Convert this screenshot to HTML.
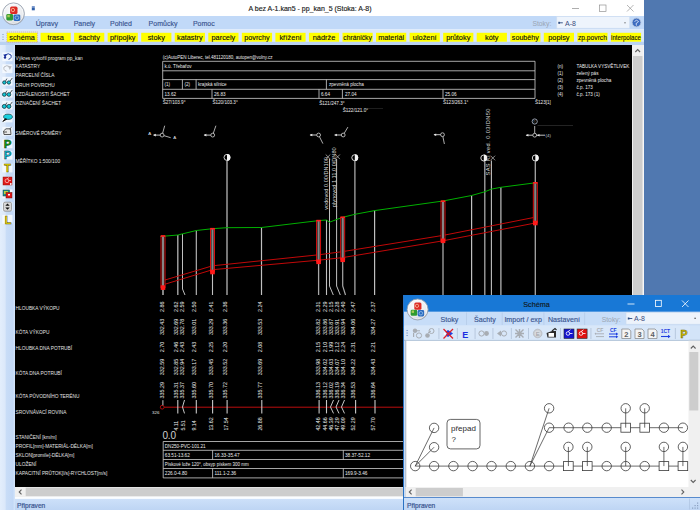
<!DOCTYPE html><html><head><meta charset="utf-8"><style>html,body{margin:0;padding:0;width:700px;height:510px;overflow:hidden;background:#5078b0;}svg{display:block;font-family:"Liberation Sans",sans-serif;}</style></head><body>
<svg width="700" height="510" viewBox="0 0 700 510">
<defs>
<linearGradient id="lefttb" x1="0" x2="1" y1="0" y2="0"><stop offset="0" stop-color="#e3eefc"/><stop offset="0.35" stop-color="#dbe8fa"/><stop offset="0.4" stop-color="#c9ddf7"/><stop offset="0.85" stop-color="#c2d8f6"/><stop offset="1" stop-color="#d6e6fa"/></linearGradient>
<linearGradient id="status" x1="0" x2="0" y1="0" y2="1"><stop offset="0" stop-color="#cfe2fa"/><stop offset="1" stop-color="#bed5f4"/></linearGradient>
<radialGradient id="orb" cx="0.45" cy="0.35" r="0.7"><stop offset="0" stop-color="#ffffff"/><stop offset="0.7" stop-color="#e8eaee"/><stop offset="1" stop-color="#a9b0bb"/></radialGradient>
</defs>
<rect x="0" y="0" width="644" height="510" fill="#ffffff"/>
<rect x="0" y="16" width="644" height="13.4" fill="#c1d9f8"/>
<rect x="0" y="29.5" width="644" height="15.5" fill="#dae8f9"/>
<rect x="0" y="41.8" width="644" height="3.2" fill="#bad2f2"/>
<text x="310" y="11" font-size="7" fill="#1a1a1a" text-anchor="middle" stroke="#1a1a1a" stroke-width="0.15">A bez A-1.kan5 - pp_kan_5 (Stoka: A-8)</text>
<rect x="572" y="8" width="7" height="0.7" fill="#8c8c8c"/>
<rect x="599.5" y="5" width="6.5" height="6.5" fill="none" stroke="#8c8c8c" stroke-width="0.65"/>
<path d="M627 5 L633.5 11.5 M633.5 5 L627 11.5" stroke="#8c8c8c" stroke-width="0.65"/>
<rect x="31.8" y="7.3" width="3" height="3" fill="#2f5fa8"/><rect x="31.8" y="6" width="3" height="1.2" fill="#7c9ad0"/>
<text x="35.8" y="26.3" font-size="7" fill="#3a5590" text-anchor="start" stroke="#3a5590" stroke-width="0.15">Úpravy</text>
<text x="73.7" y="26.3" font-size="7" fill="#3a5590" text-anchor="start" stroke="#3a5590" stroke-width="0.15">Panely</text>
<text x="110" y="26.3" font-size="7" fill="#3a5590" text-anchor="start" stroke="#3a5590" stroke-width="0.15">Pohled</text>
<text x="148.6" y="26.3" font-size="7" fill="#3a5590" text-anchor="start" stroke="#3a5590" stroke-width="0.15">Pomůcky</text>
<text x="192.9" y="26.3" font-size="7" fill="#3a5590" text-anchor="start" stroke="#3a5590" stroke-width="0.15">Pomoc</text>
<text x="532.4" y="26" font-size="6.8" fill="#9aa5b3" text-anchor="start" >Stoky:</text>
<rect x="556.8" y="16.6" width="72.8" height="11.6" fill="#eef4fc" stroke="#d0def0" stroke-width="0.6"/>
<path d="M559 22.8 h3.8" stroke="#2a4a80" stroke-width="0.9"/><rect x="558.3" y="21.8" width="1.6" height="2" fill="#2a4a80"/>
<text x="565" y="25.6" font-size="7" fill="#3a4c80" text-anchor="start" >A-8</text>
<rect x="624.5" y="22.3" width="1" height="1" fill="#333"/>
<circle cx="636.5" cy="22.5" r="4.4" fill="#3c6cc0" stroke="#b8c6dc" stroke-width="0.9"/><path d="M634.5 21.5 Q636.5 19 638.5 21.5 Q637.5 23 636 23.5 L636.5 25.5" fill="none" stroke="#e8f0ff" stroke-width="0.8"/>
<circle cx="13.5" cy="13.8" r="10.9" fill="url(#orb)" stroke="#9aa3b0" stroke-width="0.90"/><circle cx="13.5" cy="13.8" r="9.60" fill="none" stroke="#ffffff" stroke-width="0.80" opacity="0.8"/><rect x="6.30" y="14.00" width="6.80" height="6.40" rx="1.40" fill="#2f9a30"/><rect x="7.30" y="14.80" width="2.50" height="2.50" fill="#c8d860" opacity="0.8"/><rect x="13.50" y="14.40" width="6.80" height="6.60" rx="1.40" fill="#2c6cc0"/><circle cx="16.90" cy="17.70" r="1.80" fill="none" stroke="#a8d0f0" stroke-width="0.70"/><rect x="10.10" y="6.60" width="7.40" height="7.40" rx="1.60" fill="#dc2a24"/><circle cx="12.90" cy="10.00" r="1.70" fill="none" stroke="#ffd8b0" stroke-width="0.70"/>
<rect x="7.00" y="32.8" width="30.2" height="8.9" fill="#ffff00"/>
<text x="22.10" y="39.6" font-size="7.4" fill="#0a0a0a" text-anchor="middle" stroke="#111" stroke-width="0.12" textLength="25.5" lengthAdjust="spacingAndGlyphs">schéma</text>
<rect x="40.55" y="32.8" width="30.2" height="8.9" fill="#ffff00"/>
<text x="55.65" y="39.6" font-size="7.4" fill="#0a0a0a" text-anchor="middle" stroke="#111" stroke-width="0.12">trasa</text>
<rect x="74.10" y="32.8" width="30.2" height="8.9" fill="#ffff00"/>
<text x="89.20" y="39.6" font-size="7.4" fill="#0a0a0a" text-anchor="middle" stroke="#111" stroke-width="0.12">šachty</text>
<rect x="107.65" y="32.8" width="30.2" height="8.9" fill="#ffff00"/>
<text x="122.75" y="39.6" font-size="7.4" fill="#0a0a0a" text-anchor="middle" stroke="#111" stroke-width="0.12" textLength="25.5" lengthAdjust="spacingAndGlyphs">přípojky</text>
<rect x="141.20" y="32.8" width="30.2" height="8.9" fill="#ffff00"/>
<text x="156.30" y="39.6" font-size="7.4" fill="#0a0a0a" text-anchor="middle" stroke="#111" stroke-width="0.12">stoky</text>
<rect x="174.75" y="32.8" width="30.2" height="8.9" fill="#ffff00"/>
<text x="189.85" y="39.6" font-size="7.4" fill="#0a0a0a" text-anchor="middle" stroke="#111" stroke-width="0.12" textLength="25.5" lengthAdjust="spacingAndGlyphs">katastry</text>
<rect x="208.30" y="32.8" width="30.2" height="8.9" fill="#ffff00"/>
<text x="223.40" y="39.6" font-size="7.4" fill="#0a0a0a" text-anchor="middle" stroke="#111" stroke-width="0.12">parcely</text>
<rect x="241.85" y="32.8" width="30.2" height="8.9" fill="#ffff00"/>
<text x="256.95" y="39.6" font-size="7.4" fill="#0a0a0a" text-anchor="middle" stroke="#111" stroke-width="0.12" textLength="25.5" lengthAdjust="spacingAndGlyphs">povrchy</text>
<rect x="275.40" y="32.8" width="30.2" height="8.9" fill="#ffff00"/>
<text x="290.50" y="39.6" font-size="7.4" fill="#0a0a0a" text-anchor="middle" stroke="#111" stroke-width="0.12">křížení</text>
<rect x="308.95" y="32.8" width="30.2" height="8.9" fill="#ffff00"/>
<text x="324.05" y="39.6" font-size="7.4" fill="#0a0a0a" text-anchor="middle" stroke="#111" stroke-width="0.12">nádrže</text>
<rect x="342.50" y="32.8" width="30.2" height="8.9" fill="#ffff00"/>
<text x="357.60" y="39.6" font-size="7.4" fill="#0a0a0a" text-anchor="middle" stroke="#111" stroke-width="0.12" textLength="28.5" lengthAdjust="spacingAndGlyphs">chráničky</text>
<rect x="376.05" y="32.8" width="30.2" height="8.9" fill="#ffff00"/>
<text x="391.15" y="39.6" font-size="7.4" fill="#0a0a0a" text-anchor="middle" stroke="#111" stroke-width="0.12" textLength="26" lengthAdjust="spacingAndGlyphs">materiál</text>
<rect x="409.60" y="32.8" width="30.2" height="8.9" fill="#ffff00"/>
<text x="424.70" y="39.6" font-size="7.4" fill="#0a0a0a" text-anchor="middle" stroke="#111" stroke-width="0.12">uložení</text>
<rect x="443.15" y="32.8" width="30.2" height="8.9" fill="#ffff00"/>
<text x="458.25" y="39.6" font-size="7.4" fill="#0a0a0a" text-anchor="middle" stroke="#111" stroke-width="0.12">průtoky</text>
<rect x="476.70" y="32.8" width="30.2" height="8.9" fill="#ffff00"/>
<text x="491.80" y="39.6" font-size="7.4" fill="#0a0a0a" text-anchor="middle" stroke="#111" stroke-width="0.12">kóty</text>
<rect x="510.25" y="32.8" width="30.2" height="8.9" fill="#ffff00"/>
<text x="525.35" y="39.6" font-size="7.4" fill="#0a0a0a" text-anchor="middle" stroke="#111" stroke-width="0.12" textLength="27" lengthAdjust="spacingAndGlyphs">souběhy</text>
<rect x="543.80" y="32.8" width="30.2" height="8.9" fill="#ffff00"/>
<text x="558.90" y="39.6" font-size="7.4" fill="#0a0a0a" text-anchor="middle" stroke="#111" stroke-width="0.12">popisy</text>
<rect x="577.35" y="32.8" width="30.2" height="8.9" fill="#ffff00"/>
<text x="592.45" y="39.6" font-size="7.4" fill="#0a0a0a" text-anchor="middle" stroke="#111" stroke-width="0.12" textLength="29" lengthAdjust="spacingAndGlyphs">zp.povrch</text>
<rect x="610.90" y="32.8" width="30.2" height="8.9" fill="#ffff00"/>
<text x="626.00" y="39.6" font-size="7.4" fill="#0a0a0a" text-anchor="middle" stroke="#111" stroke-width="0.12" textLength="29.8" lengthAdjust="spacingAndGlyphs">interpolace</text>
<rect x="6.8" y="32" width="30.8" height="10.3" fill="none" stroke="#d68a5a" stroke-width="0.6" stroke-dasharray="1 1"/>
<rect x="2.5" y="34" width="1" height="1" fill="#7d96bd"/>
<rect x="2.5" y="36.5" width="1" height="1" fill="#7d96bd"/>
<rect x="2.5" y="39" width="1" height="1" fill="#7d96bd"/>
<rect x="0" y="45" width="15" height="465" fill="url(#lefttb)"/>
<rect x="15" y="497" width="629" height="13" fill="url(#status)"/>
<rect x="15" y="496.3" width="629" height="2.6" fill="#fbfdff"/>
<text x="17" y="507.5" font-size="6.6" fill="#3a5590" text-anchor="start" stroke="#3a5590" stroke-width="0.2">Připraven</text>
<rect x="15" y="45" width="617" height="442" fill="#000"/>
<rect x="632" y="45" width="11.5" height="442" fill="#f0f0f0"/>
<rect x="633" y="56" width="9.5" height="431" fill="#cdcdcd"/>
<path d="M635.3 52 L637.7 49.6 L640.1 52" fill="none" stroke="#606060" stroke-width="1.1"/>
<rect x="15" y="487" width="617" height="10" fill="#f0f0f0"/>
<rect x="25.7" y="487.6" width="606" height="8.5" fill="#cdcdcd"/>
<path d="M21.5 489.6 L19.2 492 L21.5 494.4" fill="none" stroke="#606060" stroke-width="1.1"/>
<g>
<clipPath id="dclip"><rect x="15" y="45" width="617" height="442"/></clipPath><g clip-path="url(#dclip)">
<text x="15.6" y="59.6" font-size="4.8" fill="#e4e4e4" text-anchor="start" >Výkres vytvořil program pp_kan</text>
<text x="15.6" y="68.2" font-size="4.8" fill="#e4e4e4" text-anchor="start" >KATASTRY</text>
<text x="15.6" y="77" font-size="4.8" fill="#e4e4e4" text-anchor="start" >PARCELNÍ ČÍSLA</text>
<text x="15.6" y="86.7" font-size="4.8" fill="#e4e4e4" text-anchor="start" >DRUH POVRCHU</text>
<text x="15.6" y="95.5" font-size="4.8" fill="#e4e4e4" text-anchor="start" >VZDÁLENOSTI ŠACHET</text>
<text x="15.6" y="104.7" font-size="4.8" fill="#e4e4e4" text-anchor="start" >OZNAČENÍ ŠACHET</text>
<text x="15.6" y="134.8" font-size="4.8" fill="#e4e4e4" text-anchor="start" >SMĚROVÉ POMĚRY</text>
<text x="15.6" y="162.6" font-size="4.8" fill="#e4e4e4" text-anchor="start" >MĚŘÍTKO 1:500/100</text>
<text x="15.6" y="310" font-size="4.8" fill="#e4e4e4" text-anchor="start" >HLOUBKA VÝKOPU</text>
<text x="15.6" y="333.7" font-size="4.8" fill="#e4e4e4" text-anchor="start" >KÓTA VÝKOPU</text>
<text x="15.6" y="350.3" font-size="4.8" fill="#e4e4e4" text-anchor="start" >HLOUBKA DNA POTRUBÍ</text>
<text x="15.6" y="374.5" font-size="4.8" fill="#e4e4e4" text-anchor="start" >KÓTA DNA POTRUBÍ</text>
<text x="15.6" y="398.2" font-size="4.8" fill="#e4e4e4" text-anchor="start" >KÓTA PŮVODNÍHO TERÉNU</text>
<text x="15.6" y="413.5" font-size="4.8" fill="#e4e4e4" text-anchor="start" >SROVNÁVACÍ ROVINA</text>
<text x="15.6" y="439.4" font-size="4.8" fill="#e4e4e4" text-anchor="start" >STANIČENÍ [km/m]</text>
<text x="15.6" y="447.7" font-size="4.8" fill="#e4e4e4" text-anchor="start" >PROFIL[mm]-MATERIÁL-DÉLKA[m]</text>
<text x="15.6" y="457.3" font-size="4.8" fill="#e4e4e4" text-anchor="start" >SKLON[promile]-DÉLKA[m]</text>
<text x="15.6" y="466" font-size="4.8" fill="#e4e4e4" text-anchor="start" >ULOŽENÍ</text>
<text x="15.6" y="475" font-size="4.8" fill="#e4e4e4" text-anchor="start" >KAPACITNÍ PRŮTOK[l/s]-RYCHLOST[m/s]</text>
<line x1="162.7" y1="61.3" x2="535" y2="61.3" stroke="#d0d0d0" stroke-width="0.8"/>
<line x1="162.7" y1="70.8" x2="535" y2="70.8" stroke="#d0d0d0" stroke-width="0.8"/>
<line x1="162.7" y1="79.6" x2="535" y2="79.6" stroke="#d0d0d0" stroke-width="0.8"/>
<line x1="162.7" y1="89.3" x2="535" y2="89.3" stroke="#d0d0d0" stroke-width="0.8"/>
<line x1="162.7" y1="98.4" x2="535" y2="98.4" stroke="#d0d0d0" stroke-width="0.8"/>
<line x1="162.7" y1="61.3" x2="162.7" y2="98.4" stroke="#d0d0d0" stroke-width="0.8"/>
<line x1="535" y1="61.3" x2="535" y2="98.4" stroke="#d0d0d0" stroke-width="0.8"/>
<line x1="182.4" y1="79.6" x2="182.4" y2="89.3" stroke="#d0d0d0" stroke-width="0.8"/>
<line x1="196.1" y1="79.6" x2="196.1" y2="89.3" stroke="#d0d0d0" stroke-width="0.8"/>
<line x1="326.4" y1="79.6" x2="326.4" y2="89.3" stroke="#d0d0d0" stroke-width="0.8"/>
<line x1="212" y1="89.3" x2="212" y2="98.4" stroke="#d0d0d0" stroke-width="0.8"/>
<line x1="319" y1="89.3" x2="319" y2="98.4" stroke="#d0d0d0" stroke-width="0.8"/>
<line x1="342.4" y1="89.3" x2="342.4" y2="98.4" stroke="#d0d0d0" stroke-width="0.8"/>
<line x1="443" y1="89.3" x2="443" y2="98.4" stroke="#d0d0d0" stroke-width="0.8"/>
<text x="162.7" y="59.3" font-size="4.5" fill="#ececec" text-anchor="start" >(c)AutoPEN Liberec, tel.481120180, autopen@volny.cz</text>
<text x="164.5" y="67.8" font-size="4.6" fill="#ececec" text-anchor="start" >k.ú. Třebařov</text>
<text x="164.5" y="86.2" font-size="4.6" fill="#ececec" text-anchor="start" >(1)</text>
<text x="184.5" y="86.2" font-size="4.6" fill="#ececec" text-anchor="start" >(2)</text>
<text x="198" y="86.2" font-size="4.6" fill="#ececec" text-anchor="start" >krajská silnice</text>
<text x="329" y="86.2" font-size="4.6" fill="#ececec" text-anchor="start" >zpevněná plocha</text>
<text x="164.5" y="95.5" font-size="4.6" fill="#ececec" text-anchor="start" >13.62</text>
<text x="214" y="95.5" font-size="4.6" fill="#ececec" text-anchor="start" >26.83</text>
<text x="321" y="95.5" font-size="4.6" fill="#ececec" text-anchor="start" >6.64</text>
<text x="345" y="95.5" font-size="4.6" fill="#ececec" text-anchor="start" >27.04</text>
<text x="445" y="95.5" font-size="4.6" fill="#ececec" text-anchor="start" >25.06</text>
<text x="162.7" y="104" font-size="4.6" fill="#ececec" text-anchor="start" >Š27/103.9°</text>
<text x="212.4" y="104" font-size="4.6" fill="#ececec" text-anchor="start" >Š120/103.3°</text>
<text x="319.2" y="104.5" font-size="4.6" fill="#ececec" text-anchor="start" >Š121/247.3°</text>
<text x="342.7" y="111.7" font-size="4.6" fill="#ececec" text-anchor="start" >Š122/121.0°</text>
<text x="443" y="104.3" font-size="4.6" fill="#ececec" text-anchor="start" >Š123/263.1°</text>
<text x="535" y="104.3" font-size="4.6" fill="#ececec" text-anchor="start" >Š123[1]</text>
<text x="557.5" y="68.3" font-size="4.6" fill="#ececec" text-anchor="start" >(n)</text>
<text x="576.5" y="68.3" font-size="4.6" fill="#ececec" text-anchor="start" >TABULKA VYSVĚTLIVEK</text>
<text x="557.5" y="75.1" font-size="4.6" fill="#ececec" text-anchor="start" >(1)</text>
<text x="576.5" y="75.1" font-size="4.6" fill="#ececec" text-anchor="start" >zelený pás</text>
<text x="557.5" y="81.9" font-size="4.6" fill="#ececec" text-anchor="start" >(2)</text>
<text x="576.5" y="81.9" font-size="4.6" fill="#ececec" text-anchor="start" >zpevněná plocha</text>
<text x="557.5" y="88.7" font-size="4.6" fill="#ececec" text-anchor="start" >(3)</text>
<text x="576.5" y="88.7" font-size="4.6" fill="#ececec" text-anchor="start" >č.p. 173</text>
<text x="557.5" y="95.8" font-size="4.6" fill="#ececec" text-anchor="start" >(4)</text>
<text x="576.5" y="95.8" font-size="4.6" fill="#ececec" text-anchor="start" >č.p. 173 (1)</text>
<circle cx="162.1" cy="135.1" r="1.9" fill="none" stroke="#d8d8d8" stroke-width="0.8"/>
<line x1="162.61" y1="133.27" x2="164.7" y2="125.7" stroke="#d8d8d8" stroke-width="0.8"/>
<line x1="163.92" y1="135.65" x2="170.7" y2="137.7" stroke="#d8d8d8" stroke-width="0.8"/>
<line x1="160.2" y1="135.1" x2="153.6" y2="135.1" stroke="#d8d8d8" stroke-width="0.9"/>
<path d="M153.1 135.1 L155.79999999999998 133.79999999999998 L155.79999999999998 136.4 Z" fill="#e8e8e8"/>
<text x="148.3" y="135.2" font-size="4.4" fill="#e8e8f0" text-anchor="start" >A</text>
<text x="173.2" y="138.8" font-size="4.4" fill="#e8e8f0" text-anchor="start" >A</text>
<circle cx="212.7" cy="135.1" r="1.9" fill="none" stroke="#d8d8d8" stroke-width="0.8"/>
<line x1="213.31" y1="133.30" x2="215.9" y2="125.7" stroke="#d8d8d8" stroke-width="0.8"/>
<line x1="210.79999999999998" y1="135.1" x2="204.2" y2="135.1" stroke="#d8d8d8" stroke-width="0.9"/>
<path d="M203.7 135.1 L206.39999999999998 133.79999999999998 L206.39999999999998 136.4 Z" fill="#e8e8e8"/>
<circle cx="318.6" cy="135" r="1.9" fill="none" stroke="#d8d8d8" stroke-width="0.8"/>
<line x1="319.45" y1="136.70" x2="322.9" y2="143.6" stroke="#d8d8d8" stroke-width="0.8"/>
<line x1="316.70000000000005" y1="135" x2="310.1" y2="135" stroke="#d8d8d8" stroke-width="0.9"/>
<path d="M309.6 135 L312.3 133.7 L312.3 136.3 Z" fill="#e8e8e8"/>
<circle cx="343.2" cy="135" r="1.9" fill="none" stroke="#d8d8d8" stroke-width="0.8"/>
<line x1="344.17" y1="133.37" x2="347.9" y2="127.1" stroke="#d8d8d8" stroke-width="0.8"/>
<line x1="341.3" y1="135" x2="334.7" y2="135" stroke="#d8d8d8" stroke-width="0.9"/>
<path d="M334.2 135 L336.9 133.7 L336.9 136.3 Z" fill="#e8e8e8"/>
<circle cx="442.5" cy="134.7" r="1.9" fill="none" stroke="#d8d8d8" stroke-width="0.8"/>
<line x1="442.88" y1="136.56" x2="444.4" y2="144" stroke="#d8d8d8" stroke-width="0.8"/>
<line x1="440.6" y1="134.7" x2="434.0" y2="134.7" stroke="#d8d8d8" stroke-width="0.9"/>
<path d="M433.5 134.7 L436.2 133.39999999999998 L436.2 136.0 Z" fill="#e8e8e8"/>
<circle cx="534.7" cy="135.2" r="1.9" fill="none" stroke="#d8d8d8" stroke-width="0.8"/>
<line x1="534.70" y1="133.30" x2="534.7" y2="126" stroke="#d8d8d8" stroke-width="0.8"/>
<line x1="532.8000000000001" y1="135.2" x2="526.2" y2="135.2" stroke="#d8d8d8" stroke-width="0.9"/>
<path d="M525.7 135.2 L528.4000000000001 133.89999999999998 L528.4000000000001 136.5 Z" fill="#e8e8e8"/>
<line x1="536.6" y1="135.2" x2="545" y2="135.2" stroke="#d8d8d8" stroke-width="0.9"/>
<path d="M537 135.2 L539.5 134 L539.5 136.4 Z" fill="#e8e8e8"/>
<text x="545.5" y="136.8" font-size="4.4" fill="#c8ccd8" text-anchor="start" >(4)</text>
<line x1="537.5" y1="125.5" x2="573" y2="125.5" stroke="#3a3a3a" stroke-width="0.6"/>
<line x1="367.5" y1="108.5" x2="383" y2="108.5" stroke="#333333" stroke-width="0.6"/>
<circle cx="534.7" cy="121.5" r="2.6" fill="none" stroke="#b8c0d0" stroke-width="0.8"/>
<text x="533.3" y="123" font-size="3" fill="#b8c0d0" text-anchor="start" >©</text>
<line x1="163" y1="236" x2="163" y2="295" stroke="#a8a8a8" stroke-width="1.6"/>
<line x1="177.8" y1="235" x2="177.8" y2="295" stroke="#a8a8a8" stroke-width="1.4"/>
<line x1="196.3" y1="230.5" x2="196.3" y2="295" stroke="#c0c0c0" stroke-width="1.1"/>
<line x1="212.5" y1="228.7" x2="212.5" y2="295" stroke="#c0c0c0" stroke-width="1.1"/>
<line x1="227" y1="160.7" x2="227" y2="295" stroke="#a8a8a8" stroke-width="1.4"/>
<line x1="261.5" y1="227.5" x2="261.5" y2="295" stroke="#c0c0c0" stroke-width="1.2"/>
<line x1="318.6" y1="220.6" x2="318.6" y2="295" stroke="#a8a8a8" stroke-width="1.3"/>
<line x1="326.5" y1="220" x2="326.5" y2="295" stroke="#c0c0c0" stroke-width="1.1"/>
<line x1="354.9" y1="161" x2="354.9" y2="295" stroke="#a8a8a8" stroke-width="1.3"/>
<line x1="374.6" y1="210.6" x2="374.6" y2="295" stroke="#c0c0c0" stroke-width="1.2"/>
<line x1="443" y1="201" x2="443" y2="295" stroke="#a8a8a8" stroke-width="1.3"/>
<line x1="471.6" y1="195.5" x2="471.6" y2="295" stroke="#c0c0c0" stroke-width="1.2"/>
<line x1="484.8" y1="161.5" x2="484.8" y2="295" stroke="#a8a8a8" stroke-width="1.3"/>
<line x1="500.9" y1="187.3" x2="500.9" y2="295" stroke="#c0c0c0" stroke-width="1.2"/>
<line x1="535.3" y1="161.5" x2="535.3" y2="295" stroke="#a8a8a8" stroke-width="1.3"/>
<path d="M182.5 234 L182.5 289 L185 295" fill="none" stroke="#c0c0c0" stroke-width="1"/>
<path d="M329.5 159 L329.5 286 L333.3 295" fill="none" stroke="#c0c0c0" stroke-width="1"/>
<path d="M336.6 159 L336.6 286 L340.3 295" fill="none" stroke="#c0c0c0" stroke-width="1"/>
<path d="M342.7 217.3 L342.7 286 L345.5 295" fill="none" stroke="#a8a8a8" stroke-width="1.2"/>
<path d="M491.4 160.5 L491.4 295" fill="none" stroke="#c0c0c0" stroke-width="1.1"/>
<circle cx="227" cy="157.4" r="3" fill="#000" stroke="#e8e8e8" stroke-width="0.9"/>
<path d="M227 154.0 A3.4 3.4 0 0 1 227 160.8 Z" fill="#f4f4f4"/>
<circle cx="354.8" cy="157.7" r="3" fill="#000" stroke="#e8e8e8" stroke-width="0.9"/>
<path d="M354.8 154.29999999999998 A3.4 3.4 0 0 1 354.8 161.1 Z" fill="#f4f4f4"/>
<circle cx="483.8" cy="158" r="3" fill="#000" stroke="#e8e8e8" stroke-width="0.9"/>
<path d="M483.8 154.6 A3.4 3.4 0 0 1 483.8 161.4 Z" fill="#f4f4f4"/>
<circle cx="535.3" cy="158" r="3" fill="#000" stroke="#e8e8e8" stroke-width="0.9"/>
<path d="M535.3 154.6 A3.4 3.4 0 0 1 535.3 161.4 Z" fill="#f4f4f4"/>
<path d="M325.7 154.5 L330.3 159.10000000000002 M330.3 154.5 L325.7 159.10000000000002" stroke="#c8c8c8" stroke-width="0.7"/>
<path d="M335.3 154.5 L339.90000000000003 159.10000000000002 M339.90000000000003 154.5 L335.3 159.10000000000002" stroke="#c8c8c8" stroke-width="0.7"/>
<path d="M490.5 155.7 L495.1 160.3 M495.1 155.7 L490.5 160.3" stroke="#c8c8c8" stroke-width="0.7"/>
<text font-size="5.6" fill="#d8d8d8" text-anchor="start" transform="translate(328.2,209.7) rotate(-90)">vodovod 0.00/DN100</text>
<text font-size="5.6" fill="#d8d8d8" text-anchor="start" transform="translate(336.1,207) rotate(-90)">plynovod 1 11.0 0/DN80</text>
<text font-size="5.6" fill="#d8d8d8" text-anchor="start" transform="translate(489.7,175.5) rotate(-90)" textLength="67" lengthAdjust="spacing">SAS  Kl  ved. 0.03/DN50</text>
<polyline points="160.3,236.5 177.8,235 196.3,230.5 212.5,228.7 227,227.7 261.5,227.5 318.6,220.6 326.5,220 329.4,222.2 342.7,217.3 354.9,214.3 374.6,210.6 443,201 471.6,195.5 485,191.7 491.5,189.1 500.9,187.3 535.3,182.8" fill="none" stroke="#00b000" stroke-width="1"/>
<polyline points="165,280 212.5,265.8 318.6,254.8 342.7,251.6 443,235.4 535.3,217.2" fill="none" stroke="#c00808" stroke-width="1"/>
<polyline points="165,284.2 212.5,269.7 318.6,260.2 342.7,257.6 443,240.8 535.3,223" fill="none" stroke="#c00808" stroke-width="1"/>
<rect x="161" y="236" width="4" height="51.60000000000002" fill="#000" stroke="#f01010" stroke-width="0.9"/>
<rect x="161.9" y="236" width="2.2" height="51.60000000000002" fill="#858585"/>
<rect x="160.8" y="235.2" width="4.4" height="1.6" fill="#ff2020"/>
<rect x="160.7" y="285.3" width="4.6" height="4.6" fill="#ff1a1a"/>
<rect x="210.5" y="228.7" width="4" height="43.30000000000001" fill="#000" stroke="#f01010" stroke-width="0.9"/>
<rect x="211.4" y="228.7" width="2.2" height="43.30000000000001" fill="#858585"/>
<rect x="210.3" y="227.89999999999998" width="4.4" height="1.6" fill="#ff2020"/>
<rect x="210.2" y="269.7" width="4.6" height="4.6" fill="#ff1a1a"/>
<rect x="316.6" y="220.6" width="4" height="41.20000000000002" fill="#000" stroke="#f01010" stroke-width="0.9"/>
<rect x="317.5" y="220.6" width="2.2" height="41.20000000000002" fill="#858585"/>
<rect x="316.40000000000003" y="219.79999999999998" width="4.4" height="1.6" fill="#ff2020"/>
<rect x="316.3" y="259.5" width="4.6" height="4.6" fill="#ff1a1a"/>
<rect x="340.7" y="217.3" width="4" height="42.5" fill="#000" stroke="#f01010" stroke-width="0.9"/>
<rect x="341.59999999999997" y="217.3" width="2.2" height="42.5" fill="#858585"/>
<rect x="340.5" y="216.5" width="4.4" height="1.6" fill="#ff2020"/>
<rect x="340.4" y="257.5" width="4.6" height="4.6" fill="#ff1a1a"/>
<rect x="441" y="201.2" width="4" height="39.60000000000002" fill="#000" stroke="#f01010" stroke-width="0.9"/>
<rect x="441.9" y="201.2" width="2.2" height="39.60000000000002" fill="#858585"/>
<rect x="440.8" y="200.39999999999998" width="4.4" height="1.6" fill="#ff2020"/>
<rect x="440.7" y="238.5" width="4.6" height="4.6" fill="#ff1a1a"/>
<rect x="533.3" y="182.8" width="4" height="40.19999999999999" fill="#000" stroke="#f01010" stroke-width="0.9"/>
<rect x="534.1999999999999" y="182.8" width="2.2" height="40.19999999999999" fill="#858585"/>
<rect x="533.0999999999999" y="182.0" width="4.4" height="1.6" fill="#ff2020"/>
<rect x="533.0" y="220.7" width="4.6" height="4.6" fill="#ff1a1a"/>
<text x="0" y="0" font-size="5.4" fill="#ececec" text-anchor="middle" transform="translate(164.36,306.8) rotate(-90) scale(1,1.15)">2.86</text>
<text x="0" y="0" font-size="5.4" fill="#ececec" text-anchor="middle" transform="translate(164.36,326.9) rotate(-90) scale(1,1.15)">332.43</text>
<text x="0" y="0" font-size="5.4" fill="#ececec" text-anchor="middle" transform="translate(164.36,347) rotate(-90) scale(1,1.15)">2.70</text>
<text x="0" y="0" font-size="5.4" fill="#ececec" text-anchor="middle" transform="translate(164.36,367) rotate(-90) scale(1,1.15)">332.59</text>
<text x="0" y="0" font-size="5.4" fill="#ececec" text-anchor="middle" transform="translate(164.36,390.2) rotate(-90) scale(1,1.15)">335.29</text>
<text x="0" y="0" font-size="5.4" fill="#ececec" text-anchor="middle" transform="translate(177.76,306.8) rotate(-90) scale(1,1.15)">2.62</text>
<text x="0" y="0" font-size="5.4" fill="#ececec" text-anchor="middle" transform="translate(177.76,326.9) rotate(-90) scale(1,1.15)">332.69</text>
<text x="0" y="0" font-size="5.4" fill="#ececec" text-anchor="middle" transform="translate(177.76,347) rotate(-90) scale(1,1.15)">2.46</text>
<text x="0" y="0" font-size="5.4" fill="#ececec" text-anchor="middle" transform="translate(177.76,367) rotate(-90) scale(1,1.15)">332.85</text>
<text x="0" y="0" font-size="5.4" fill="#ececec" text-anchor="middle" transform="translate(177.76,390.2) rotate(-90) scale(1,1.15)">335.31</text>
<text x="0" y="0" font-size="5.4" fill="#ececec" text-anchor="middle" transform="translate(183.96,306.8) rotate(-90) scale(1,1.15)">2.59</text>
<text x="0" y="0" font-size="5.4" fill="#ececec" text-anchor="middle" transform="translate(183.96,326.9) rotate(-90) scale(1,1.15)">332.78</text>
<text x="0" y="0" font-size="5.4" fill="#ececec" text-anchor="middle" transform="translate(183.96,347) rotate(-90) scale(1,1.15)">2.43</text>
<text x="0" y="0" font-size="5.4" fill="#ececec" text-anchor="middle" transform="translate(183.96,367) rotate(-90) scale(1,1.15)">332.94</text>
<text x="0" y="0" font-size="5.4" fill="#ececec" text-anchor="middle" transform="translate(183.96,390.2) rotate(-90) scale(1,1.15)">335.37</text>
<text x="0" y="0" font-size="5.4" fill="#ececec" text-anchor="middle" transform="translate(195.86,306.8) rotate(-90) scale(1,1.15)">2.50</text>
<text x="0" y="0" font-size="5.4" fill="#ececec" text-anchor="middle" transform="translate(195.86,326.9) rotate(-90) scale(1,1.15)">333.01</text>
<text x="0" y="0" font-size="5.4" fill="#ececec" text-anchor="middle" transform="translate(195.86,347) rotate(-90) scale(1,1.15)">2.43</text>
<text x="0" y="0" font-size="5.4" fill="#ececec" text-anchor="middle" transform="translate(195.86,367) rotate(-90) scale(1,1.15)">333.17</text>
<text x="0" y="0" font-size="5.4" fill="#ececec" text-anchor="middle" transform="translate(195.86,390.2) rotate(-90) scale(1,1.15)">335.60</text>
<text x="0" y="0" font-size="5.4" fill="#ececec" text-anchor="middle" transform="translate(212.56,306.8) rotate(-90) scale(1,1.15)">2.41</text>
<text x="0" y="0" font-size="5.4" fill="#ececec" text-anchor="middle" transform="translate(212.56,326.9) rotate(-90) scale(1,1.15)">333.29</text>
<text x="0" y="0" font-size="5.4" fill="#ececec" text-anchor="middle" transform="translate(212.56,347) rotate(-90) scale(1,1.15)">2.25</text>
<text x="0" y="0" font-size="5.4" fill="#ececec" text-anchor="middle" transform="translate(212.56,367) rotate(-90) scale(1,1.15)">333.45</text>
<text x="0" y="0" font-size="5.4" fill="#ececec" text-anchor="middle" transform="translate(212.56,390.2) rotate(-90) scale(1,1.15)">335.70</text>
<text x="0" y="0" font-size="5.4" fill="#ececec" text-anchor="middle" transform="translate(226.76,306.8) rotate(-90) scale(1,1.15)">2.36</text>
<text x="0" y="0" font-size="5.4" fill="#ececec" text-anchor="middle" transform="translate(226.76,326.9) rotate(-90) scale(1,1.15)">333.36</text>
<text x="0" y="0" font-size="5.4" fill="#ececec" text-anchor="middle" transform="translate(226.76,347) rotate(-90) scale(1,1.15)">2.20</text>
<text x="0" y="0" font-size="5.4" fill="#ececec" text-anchor="middle" transform="translate(226.76,367) rotate(-90) scale(1,1.15)">333.52</text>
<text x="0" y="0" font-size="5.4" fill="#ececec" text-anchor="middle" transform="translate(226.76,390.2) rotate(-90) scale(1,1.15)">335.72</text>
<text x="0" y="0" font-size="5.4" fill="#ececec" text-anchor="middle" transform="translate(262.26,306.8) rotate(-90) scale(1,1.15)">2.24</text>
<text x="0" y="0" font-size="5.4" fill="#ececec" text-anchor="middle" transform="translate(262.26,326.9) rotate(-90) scale(1,1.15)">333.53</text>
<text x="0" y="0" font-size="5.4" fill="#ececec" text-anchor="middle" transform="translate(262.26,347) rotate(-90) scale(1,1.15)">2.08</text>
<text x="0" y="0" font-size="5.4" fill="#ececec" text-anchor="middle" transform="translate(262.26,367) rotate(-90) scale(1,1.15)">333.69</text>
<text x="0" y="0" font-size="5.4" fill="#ececec" text-anchor="middle" transform="translate(262.26,390.2) rotate(-90) scale(1,1.15)">335.77</text>
<text x="0" y="0" font-size="5.4" fill="#ececec" text-anchor="middle" transform="translate(320.06,306.8) rotate(-90) scale(1,1.15)">2.31</text>
<text x="0" y="0" font-size="5.4" fill="#ececec" text-anchor="middle" transform="translate(320.06,326.9) rotate(-90) scale(1,1.15)">333.82</text>
<text x="0" y="0" font-size="5.4" fill="#ececec" text-anchor="middle" transform="translate(320.06,347) rotate(-90) scale(1,1.15)">2.15</text>
<text x="0" y="0" font-size="5.4" fill="#ececec" text-anchor="middle" transform="translate(320.06,367) rotate(-90) scale(1,1.15)">333.98</text>
<text x="0" y="0" font-size="5.4" fill="#ececec" text-anchor="middle" transform="translate(320.06,390.2) rotate(-90) scale(1,1.15)">336.13</text>
<text x="0" y="0" font-size="5.4" fill="#ececec" text-anchor="middle" transform="translate(326.86,306.8) rotate(-90) scale(1,1.15)">2.29</text>
<text x="0" y="0" font-size="5.4" fill="#ececec" text-anchor="middle" transform="translate(326.86,326.9) rotate(-90) scale(1,1.15)">333.86</text>
<text x="0" y="0" font-size="5.4" fill="#ececec" text-anchor="middle" transform="translate(326.86,347) rotate(-90) scale(1,1.15)">2.10</text>
<text x="0" y="0" font-size="5.4" fill="#ececec" text-anchor="middle" transform="translate(326.86,367) rotate(-90) scale(1,1.15)">334.02</text>
<text x="0" y="0" font-size="5.4" fill="#ececec" text-anchor="middle" transform="translate(326.86,390.2) rotate(-90) scale(1,1.15)">336.12</text>
<text x="0" y="0" font-size="5.4" fill="#ececec" text-anchor="middle" transform="translate(332.96,306.8) rotate(-90) scale(1,1.15)">2.15</text>
<text x="0" y="0" font-size="5.4" fill="#ececec" text-anchor="middle" transform="translate(332.96,326.9) rotate(-90) scale(1,1.15)">333.87</text>
<text x="0" y="0" font-size="5.4" fill="#ececec" text-anchor="middle" transform="translate(332.96,347) rotate(-90) scale(1,1.15)">1.99</text>
<text x="0" y="0" font-size="5.4" fill="#ececec" text-anchor="middle" transform="translate(332.96,367) rotate(-90) scale(1,1.15)">334.03</text>
<text x="0" y="0" font-size="5.4" fill="#ececec" text-anchor="middle" transform="translate(332.96,390.2) rotate(-90) scale(1,1.15)">336.02</text>
<text x="0" y="0" font-size="5.4" fill="#ececec" text-anchor="middle" transform="translate(338.66,306.8) rotate(-90) scale(1,1.15)">2.28</text>
<text x="0" y="0" font-size="5.4" fill="#ececec" text-anchor="middle" transform="translate(338.66,326.9) rotate(-90) scale(1,1.15)">333.91</text>
<text x="0" y="0" font-size="5.4" fill="#ececec" text-anchor="middle" transform="translate(338.66,347) rotate(-90) scale(1,1.15)">2.12</text>
<text x="0" y="0" font-size="5.4" fill="#ececec" text-anchor="middle" transform="translate(338.66,367) rotate(-90) scale(1,1.15)">334.07</text>
<text x="0" y="0" font-size="5.4" fill="#ececec" text-anchor="middle" transform="translate(338.66,390.2) rotate(-90) scale(1,1.15)">336.19</text>
<text x="0" y="0" font-size="5.4" fill="#ececec" text-anchor="middle" transform="translate(344.76,306.8) rotate(-90) scale(1,1.15)">2.40</text>
<text x="0" y="0" font-size="5.4" fill="#ececec" text-anchor="middle" transform="translate(344.76,326.9) rotate(-90) scale(1,1.15)">333.94</text>
<text x="0" y="0" font-size="5.4" fill="#ececec" text-anchor="middle" transform="translate(344.76,347) rotate(-90) scale(1,1.15)">2.24</text>
<text x="0" y="0" font-size="5.4" fill="#ececec" text-anchor="middle" transform="translate(344.76,367) rotate(-90) scale(1,1.15)">334.10</text>
<text x="0" y="0" font-size="5.4" fill="#ececec" text-anchor="middle" transform="translate(344.76,390.2) rotate(-90) scale(1,1.15)">336.34</text>
<text x="0" y="0" font-size="5.4" fill="#ececec" text-anchor="middle" transform="translate(354.86,306.8) rotate(-90) scale(1,1.15)">2.47</text>
<text x="0" y="0" font-size="5.4" fill="#ececec" text-anchor="middle" transform="translate(354.86,326.9) rotate(-90) scale(1,1.15)">334.06</text>
<text x="0" y="0" font-size="5.4" fill="#ececec" text-anchor="middle" transform="translate(354.86,347) rotate(-90) scale(1,1.15)">2.31</text>
<text x="0" y="0" font-size="5.4" fill="#ececec" text-anchor="middle" transform="translate(354.86,367) rotate(-90) scale(1,1.15)">334.22</text>
<text x="0" y="0" font-size="5.4" fill="#ececec" text-anchor="middle" transform="translate(354.86,390.2) rotate(-90) scale(1,1.15)">336.53</text>
<text x="0" y="0" font-size="5.4" fill="#ececec" text-anchor="middle" transform="translate(374.96,306.8) rotate(-90) scale(1,1.15)">2.37</text>
<text x="0" y="0" font-size="5.4" fill="#ececec" text-anchor="middle" transform="translate(374.96,326.9) rotate(-90) scale(1,1.15)">334.27</text>
<text x="0" y="0" font-size="5.4" fill="#ececec" text-anchor="middle" transform="translate(374.96,347) rotate(-90) scale(1,1.15)">2.21</text>
<text x="0" y="0" font-size="5.4" fill="#ececec" text-anchor="middle" transform="translate(374.96,367) rotate(-90) scale(1,1.15)">334.43</text>
<text x="0" y="0" font-size="5.4" fill="#ececec" text-anchor="middle" transform="translate(374.96,390.2) rotate(-90) scale(1,1.15)">336.64</text>
<line x1="164.2" y1="407.2" x2="632" y2="407.2" stroke="#d01010" stroke-width="0.9"/>
<circle cx="162.2" cy="407.2" r="1.9" fill="none" stroke="#d01010" stroke-width="0.8"/>
<text x="152" y="413.6" font-size="4.4" fill="#e0e0e0" text-anchor="start" >326</text>
<line x1="177.8" y1="400" x2="177.8" y2="413.4" stroke="#c8c8c8" stroke-width="1.1"/>
<line x1="196.3" y1="400" x2="196.3" y2="413.4" stroke="#c8c8c8" stroke-width="1.1"/>
<line x1="212.6" y1="400" x2="212.6" y2="413.4" stroke="#c8c8c8" stroke-width="1.1"/>
<line x1="227.1" y1="400" x2="227.1" y2="413.4" stroke="#c8c8c8" stroke-width="1.1"/>
<line x1="261.8" y1="400" x2="261.8" y2="413.4" stroke="#c8c8c8" stroke-width="1.1"/>
<line x1="319.1" y1="400" x2="319.1" y2="413.4" stroke="#c8c8c8" stroke-width="1.1"/>
<line x1="326.5" y1="400" x2="326.5" y2="413.4" stroke="#c8c8c8" stroke-width="1.1"/>
<line x1="355.6" y1="400" x2="355.6" y2="413.4" stroke="#c8c8c8" stroke-width="1.1"/>
<line x1="375" y1="400" x2="375" y2="413.4" stroke="#c8c8c8" stroke-width="1.1"/>
<line x1="162.9" y1="400.2" x2="162.9" y2="405.3" stroke="#c8c8c8" stroke-width="1"/>
<path d="M184.5 400 L182.5 407 L184.5 413.4" fill="none" stroke="#c8c8c8" stroke-width="1"/>
<path d="M333.5 400 L330.5 407 L333.5 413.4" fill="none" stroke="#c8c8c8" stroke-width="1"/>
<path d="M339 400 L336 407 L339 413.4" fill="none" stroke="#c8c8c8" stroke-width="1"/>
<path d="M344.5 400 L341.5 407 L344.5 413.4" fill="none" stroke="#c8c8c8" stroke-width="1"/>
<text font-size="5.3" fill="#ececec" text-anchor="start" transform="translate(177.80,430.6) rotate(-90) scale(1,1.15)">4.11</text>
<text font-size="5.3" fill="#ececec" text-anchor="start" transform="translate(184.70,430.6) rotate(-90) scale(1,1.15)">5.51</text>
<text font-size="5.3" fill="#ececec" text-anchor="start" transform="translate(195.80,430.6) rotate(-90) scale(1,1.15)">9.14</text>
<text font-size="5.3" fill="#ececec" text-anchor="start" transform="translate(213.00,430.6) rotate(-90) scale(1,1.15)">13.62</text>
<text font-size="5.3" fill="#ececec" text-anchor="start" transform="translate(227.50,430.6) rotate(-90) scale(1,1.15)">17.54</text>
<text font-size="5.3" fill="#ececec" text-anchor="start" transform="translate(262.30,430.6) rotate(-90) scale(1,1.15)">26.88</text>
<text font-size="5.3" fill="#ececec" text-anchor="start" transform="translate(320.00,430.6) rotate(-90) scale(1,1.15)">42.46</text>
<text font-size="5.3" fill="#ececec" text-anchor="start" transform="translate(326.80,430.6) rotate(-90) scale(1,1.15)">44.66</text>
<text font-size="5.3" fill="#ececec" text-anchor="start" transform="translate(332.90,430.6) rotate(-90) scale(1,1.15)">46.39</text>
<text font-size="5.3" fill="#ececec" text-anchor="start" transform="translate(338.60,430.6) rotate(-90) scale(1,1.15)">47.29</text>
<text font-size="5.3" fill="#ececec" text-anchor="start" transform="translate(344.70,430.6) rotate(-90) scale(1,1.15)">49.09</text>
<text font-size="5.3" fill="#ececec" text-anchor="start" transform="translate(354.80,430.6) rotate(-90) scale(1,1.15)">52.29</text>
<text font-size="5.3" fill="#ececec" text-anchor="start" transform="translate(374.90,430.6) rotate(-90) scale(1,1.15)">57.70</text>
<text x="162.4" y="439" font-size="10" fill="#d0d0d0" text-anchor="start" font-family="Liberation Sans" textLength="13.6">0.0</text>
<line x1="163.2" y1="441.5" x2="632" y2="441.5" stroke="#d0d0d0" stroke-width="0.8"/>
<line x1="163.2" y1="450.3" x2="632" y2="450.3" stroke="#d0d0d0" stroke-width="0.8"/>
<line x1="163.2" y1="459.5" x2="632" y2="459.5" stroke="#d0d0d0" stroke-width="0.8"/>
<line x1="163.2" y1="468.5" x2="632" y2="468.5" stroke="#d0d0d0" stroke-width="0.8"/>
<line x1="163.2" y1="477.9" x2="632" y2="477.9" stroke="#d0d0d0" stroke-width="0.8"/>
<line x1="163.2" y1="441.5" x2="163.2" y2="477.9" stroke="#d0d0d0" stroke-width="0.8"/>
<line x1="212.6" y1="450.3" x2="212.6" y2="459.5" stroke="#d0d0d0" stroke-width="0.8"/>
<line x1="212.6" y1="468.5" x2="212.6" y2="477.9" stroke="#d0d0d0" stroke-width="0.8"/>
<line x1="343.3" y1="450.3" x2="343.3" y2="459.5" stroke="#d0d0d0" stroke-width="0.8"/>
<line x1="343.3" y1="468.5" x2="343.3" y2="477.9" stroke="#d0d0d0" stroke-width="0.8"/>
<text x="164.8" y="447.7" font-size="4.6" fill="#ececec" text-anchor="start" >DN250-PVC-101.21</text>
<text x="164.8" y="456.6" font-size="4.7" fill="#ececec" text-anchor="start" >63.51-13.62</text>
<text x="214.5" y="456.6" font-size="4.7" fill="#ececec" text-anchor="start" >16.33-35.47</text>
<text x="345" y="456.6" font-size="4.7" fill="#ececec" text-anchor="start" >38.37-52.12</text>
<text x="164.8" y="465.7" font-size="4.5" fill="#ececec" text-anchor="start" >Pískové lože 120°, obsyp pískem 300 mm</text>
<text x="164.8" y="474.8" font-size="4.7" fill="#ececec" text-anchor="start" >226.0-4.80</text>
<text x="214.5" y="474.8" font-size="4.7" fill="#ececec" text-anchor="start" >111.1-2.36</text>
<text x="345" y="474.8" font-size="4.7" fill="#ececec" text-anchor="start" >169.9-3.46</text>
</g></g>
<rect x="2.3" y="52.4" width="10.2" height="8.8" fill="#f8fbff" opacity="0.85"/>
<rect x="2.3" y="64.3" width="10.2" height="8.8" fill="#f8fbff" opacity="0.85"/>
<rect x="2.3" y="76.8" width="10.2" height="8.8" fill="#f8fbff" opacity="0.85"/>
<rect x="2.3" y="88.8" width="10.2" height="8.8" fill="#f8fbff" opacity="0.85"/>
<rect x="2.3" y="100.69999999999999" width="10.2" height="8.8" fill="#f8fbff" opacity="0.85"/>
<rect x="2.3" y="113.6" width="10.2" height="8.8" fill="#f8fbff" opacity="0.85"/>
<rect x="2.3" y="126.79999999999998" width="10.2" height="8.8" fill="#f8fbff" opacity="0.85"/>
<rect x="2.3" y="139.4" width="10.2" height="8.8" fill="#f8fbff" opacity="0.85"/>
<rect x="2.3" y="150.79999999999998" width="10.2" height="8.8" fill="#f8fbff" opacity="0.85"/>
<rect x="2.3" y="163.6" width="10.2" height="8.8" fill="#f8fbff" opacity="0.85"/>
<rect x="2.3" y="176.6" width="10.2" height="8.8" fill="#f8fbff" opacity="0.85"/>
<rect x="2.3" y="189.5" width="10.2" height="8.8" fill="#f8fbff" opacity="0.85"/>
<rect x="2.3" y="202.2" width="10.2" height="8.8" fill="#f8fbff" opacity="0.85"/>
<rect x="2.3" y="214.9" width="10.2" height="8.8" fill="#f8fbff" opacity="0.85"/>
<path d="M5 55 Q8.5 52.5 11 55 Q12 58.5 8.5 59.3" fill="none" stroke="#2040a0" stroke-width="1"/><path d="M3.3 54.5 L7 54.3 L5.2 58 Z" fill="#1830a0"/><circle cx="5" cy="57.6" r="1.2" fill="#1a2c90"/>
<path d="M10 66.8 Q6.5 64.5 4 67 Q3.2 70.5 6.5 71.2" fill="none" stroke="#b8bcc2" stroke-width="1"/><path d="M11.7 66.3 L8 66 L9.8 70 Z" fill="#b8bcc2"/>
<path d="M5.3 81.4 L6.9 78.60000000000001 M10.1 81.0 L12.3 78.0" stroke="#203038" stroke-width="0.8"/>
<circle cx="4.3" cy="82.5" r="1.665" fill="#12c6d6" stroke="#0c2a34" stroke-width="0.75"/><circle cx="8.9" cy="82.5" r="1.665" fill="#12c6d6" stroke="#0c2a34" stroke-width="0.75"/>
<path d="M6.2 82.2 L7.0 82.2" stroke="#0c2a34" stroke-width="0.7"/>
<path d="M5.3 93.4 L6.9 90.60000000000001 M10.1 93.0 L12.3 90.0" stroke="#203038" stroke-width="0.8"/>
<circle cx="4.3" cy="94.5" r="1.85" fill="#12c6d6" stroke="#0c2a34" stroke-width="0.75"/><circle cx="8.9" cy="94.5" r="1.85" fill="#12c6d6" stroke="#0c2a34" stroke-width="0.75"/>
<path d="M6.2 94.2 L7.0 94.2" stroke="#0c2a34" stroke-width="0.7"/>
<path d="M5.3 105.3 L6.9 102.5 M10.1 104.89999999999999 L12.3 101.89999999999999" stroke="#203038" stroke-width="0.8"/>
<circle cx="4.3" cy="106.39999999999999" r="1.9980000000000002" fill="#12c6d6" stroke="#0c2a34" stroke-width="0.75"/><circle cx="8.9" cy="106.39999999999999" r="1.9980000000000002" fill="#12c6d6" stroke="#0c2a34" stroke-width="0.75"/>
<path d="M6.2 106.1 L7.0 106.1" stroke="#0c2a34" stroke-width="0.7"/>
<ellipse cx="8" cy="116.8" rx="4.4" ry="2.6" fill="#18d0e0" stroke="#0a3a40" stroke-width="0.7"/><path d="M5.5 118.5 L2.8 121.5 L7 119" fill="#0a0a0a" stroke="#0a0a0a" stroke-width="0.8"/>
<path d="M3.5 131 L6 128.8 L10.5 128.8 L11 134.5 L4 134.5 Z" fill="#e8e8e8" stroke="#303030" stroke-width="0.8"/><path d="M9.5 129 L11.5 127.3 M4 132 h3" stroke="#303030" stroke-width="0.8"/>
<text x="7.6" y="148" font-size="11.5" font-weight="bold" fill="#12a012" text-anchor="middle" stroke="#083808" stroke-width="0.5">P</text>
<text x="7.6" y="159.4" font-size="11.5" font-weight="bold" fill="#10c4dc" text-anchor="middle" stroke="#083848" stroke-width="0.5">P</text>
<text x="7.6" y="172" font-size="11" font-weight="bold" fill="#f4e400" text-anchor="middle" stroke="#5a5000" stroke-width="0.5">T</text>
<rect x="3" y="177" width="9" height="8" fill="#e01818" stroke="#801010" stroke-width="0.5"/><circle cx="7" cy="180.8" r="1.9" fill="none" stroke="#ffd0d0" stroke-width="0.7"/><path d="M8.5 180.5 h2.5 M7 179 l2 -1.5" stroke="#ffd0d0" stroke-width="0.7"/><circle cx="10.8" cy="184" r="0.9" fill="#fff"/>
<rect x="3" y="190" width="6.5" height="6" fill="#209090" stroke="#104040" stroke-width="0.5"/><rect x="4" y="191" width="4" height="3" fill="#c0d040"/><rect x="6" y="192.5" width="6" height="5.5" fill="#e01818" stroke="#601010" stroke-width="0.5"/><rect x="8" y="194" width="2" height="1.5" fill="#fff"/>
<rect x="3.5" y="202.2" width="8" height="9" rx="1.5" fill="#d8d8d8" stroke="#707070" stroke-width="0.6"/><path d="M5.3 205.8 L7.5 203.6 L9.7 205.8 Z M5.3 207.6 L7.5 209.8 L9.7 207.6 Z" fill="#101010"/>
<text x="8" y="223.6" font-size="11" font-weight="bold" fill="#f4e400" text-anchor="middle" stroke="#5a5000" stroke-width="0.5">L</text>
<rect x="403" y="295" width="297" height="215" fill="#c6dcf8"/>
<rect x="403" y="295" width="297" height="16.8" fill="#1878d6"/>
<rect x="403" y="295" width="1" height="215" fill="#2a72c4"/>
<text x="536.5" y="306.8" font-size="7.2" fill="#101820" text-anchor="middle" stroke="#101820" stroke-width="0.15">Schéma</text>
<rect x="627.5" y="303.6" width="7" height="0.8" fill="#fff"/>
<rect x="655.5" y="300.3" width="5.8" height="6.2" fill="none" stroke="#fff" stroke-width="0.8"/>
<path d="M682 300.5 L688.5 307 M688.5 300.5 L682 307" stroke="#fff" stroke-width="0.8"/>
<rect x="404" y="311.8" width="296" height="13.6" fill="#c7ddf8"/>
<text x="440.5" y="321.8" font-size="7.1" fill="#3a5590" text-anchor="start" stroke="#3a5590" stroke-width="0.15">Stoky</text>
<text x="474" y="321.8" font-size="7.1" fill="#3a5590" text-anchor="start" stroke="#3a5590" stroke-width="0.15">Šachty</text>
<text x="504.4" y="321.8" font-size="7.1" fill="#3a5590" text-anchor="start" stroke="#3a5590" stroke-width="0.15">Import / exp</text>
<text x="548" y="321.8" font-size="7.1" fill="#3a5590" text-anchor="start" stroke="#3a5590" stroke-width="0.15">Nastavení</text>
<rect x="466" y="312.5" width="0.7" height="12.5" fill="#b3c9e6"/>
<rect x="501.8" y="312.5" width="0.7" height="12.5" fill="#b3c9e6"/>
<rect x="543.6" y="312.5" width="0.7" height="12.5" fill="#b3c9e6"/>
<rect x="584.4" y="312.5" width="0.7" height="12.5" fill="#b3c9e6"/>
<text x="601.7" y="321.8" font-size="6.8" fill="#9aa5b3" text-anchor="start" >Stoky:</text>
<rect x="626" y="312.4" width="80" height="11.8" fill="#edf3fb" stroke="#c9d9ee" stroke-width="0.6"/>
<path d="M628.5 318.5 h3.8" stroke="#2a4a80" stroke-width="0.9"/><rect x="627.8" y="317.5" width="1.6" height="2" fill="#2a4a80"/>
<text x="634" y="321.4" font-size="7" fill="#3a4c80" text-anchor="start" >A-8</text>
<rect x="694.5" y="317.7" width="1.2" height="1.2" fill="#333"/>
<rect x="404" y="325.4" width="296" height="15.4" fill="#d3e4f8"/>
<rect x="404" y="339.8" width="296" height="1" fill="#9fb3cc"/>
<rect x="404" y="325.4" width="286" height="14.4" rx="2" fill="#d8e7f9"/>
<rect x="406.6" y="330" width="1" height="1" fill="#5a7fc0"/>
<rect x="406.6" y="332.5" width="1" height="1" fill="#5a7fc0"/>
<rect x="406.6" y="335" width="1" height="1" fill="#5a7fc0"/>
<rect x="438.6" y="328" width="0.7" height="11" fill="#aabbd2"/>
<rect x="456.9" y="328" width="0.7" height="11" fill="#aabbd2"/>
<rect x="474.7" y="328" width="0.7" height="11" fill="#aabbd2"/>
<rect x="492.6" y="328" width="0.7" height="11" fill="#aabbd2"/>
<rect x="510.9" y="328" width="0.7" height="11" fill="#aabbd2"/>
<rect x="528.3" y="328" width="0.7" height="11" fill="#aabbd2"/>
<rect x="560" y="328" width="0.7" height="11" fill="#aabbd2"/>
<rect x="590.6" y="328" width="0.7" height="11" fill="#aabbd2"/>
<rect x="674.9" y="328" width="0.7" height="11" fill="#aabbd2"/>
<circle cx="415" cy="330.8" r="2.2" fill="#a8adb3"/><rect x="415" y="330.3" width="5" height="1" fill="#a8adb3"/><circle cx="419" cy="335.5" r="2.6" fill="none" stroke="#a8adb3" stroke-width="1"/><rect x="413" y="333" width="1.2" height="4" fill="#a8adb3"/>
<circle cx="431.5" cy="331" r="2.5" fill="none" stroke="#a8adb3" stroke-width="1"/><circle cx="427.5" cy="335.5" r="2.3" fill="#a8adb3"/><path d="M428 333 L431 331" stroke="#a8adb3"/>
<path d="M443.5 333.5 L448 330 L453 333.5 L448 337 Z" fill="#1f3fe0"/><circle cx="445" cy="333.5" r="1.6" fill="#fff"/>
<path d="M443.5 329 L453 338.5 M453 329 L443.5 338.5" stroke="#e0202a" stroke-width="1.3"/>
<text x="465.3" y="337.6" font-size="9" fill="#1c2ee0" text-anchor="middle" font-weight="bold">E</text>
<circle cx="481.5" cy="333.5" r="2.6" fill="none" stroke="#a8adb3" stroke-width="1"/><circle cx="486.5" cy="333.5" r="2.4" fill="#a8adb3"/>
<circle cx="504" cy="333.5" r="2.6" fill="none" stroke="#a8adb3" stroke-width="1"/><path d="M497 333.5 L501 330.5 L501 336.5 Z" fill="#a8adb3"/><rect x="499" y="332.8" width="3" height="1.4" fill="#a8adb3"/>
<path d="M515.5 329.5 L523.5 337.5 M523.5 329.5 L515.5 337.5 M519.5 329 L519.5 338 M515 333.5 L524 333.5" stroke="#a8adb3" stroke-width="1.4"/>
<circle cx="537.7" cy="333.5" r="4.3" fill="#c9cdd2" stroke="#b5b9bf" stroke-width="0.8"/><circle cx="537.7" cy="333.5" r="3" fill="#d8dbe0"/>
<text x="537.7" y="336" font-size="6" fill="#9aa0a6" text-anchor="middle" >E</text>
<path d="M546.5 333 L552 331 L556 331 L556 337.5 L547.5 337.5 Z" fill="#2b2b2b"/><rect x="548.5" y="333" width="5.5" height="3.8" fill="#fff"/><path d="M552 331 L555 328.5 L556.5 330" stroke="#2b2b2b" stroke-width="1.2" fill="none"/>
<rect x="564" y="329" width="10" height="9.5" fill="#1414d0" stroke="#2a2a2a" stroke-width="0.6"/><circle cx="568" cy="333.5" r="1.8" fill="none" stroke="#fff" stroke-width="0.8"/><path d="M569.5 333.5 h3 M568 331.7 l2.5 -2" stroke="#fff" stroke-width="0.8"/>
<rect x="577.1" y="329" width="10" height="9.5" fill="#e01010" stroke="#2a2a2a" stroke-width="0.6"/><circle cx="581" cy="333.5" r="1.8" fill="none" stroke="#fff" stroke-width="0.8"/><path d="M582.5 333.5 h3 M581 331.7 l2.5 -2" stroke="#fff" stroke-width="0.8"/>
<text x="600" y="332.2" font-size="5" fill="#a8adb3" text-anchor="middle" font-weight="bold">CF</text>
<path d="M596 333.8 h8 M596 336.6 h8" stroke="#a8adb3" stroke-width="0.9"/><path d="M596 332.5 l-1.5 1.3 l1.5 1.3 Z" fill="#a8adb3"/>
<text x="613.3" y="332.2" font-size="5" fill="#1c3ee0" text-anchor="middle" font-weight="bold">CF</text>
<path d="M609 334 h7.5 M609 336.8 h7.5" stroke="#1c3ee0" stroke-width="1"/><path d="M616 332.6 l2.3 1.4 l-2.3 1.4 Z M616 335.4 l2.3 1.4 l-2.3 1.4 Z" fill="#1c3ee0"/>
<path d="M621.8 329 h7 l2 2 v7.5 h-9 Z" fill="#f4f4f4" stroke="#8a8d91" stroke-width="0.8"/>
<text x="626.3" y="337" font-size="7.5" fill="#5a5d61" text-anchor="middle" font-weight="bold">2</text>
<path d="M635.0 329 h7 l2 2 v7.5 h-9 Z" fill="#f4f4f4" stroke="#8a8d91" stroke-width="0.8"/>
<text x="639.5" y="337" font-size="7.5" fill="#5a5d61" text-anchor="middle" font-weight="bold">3</text>
<path d="M648.0 329 h7 l2 2 v7.5 h-9 Z" fill="#f4f4f4" stroke="#8a8d91" stroke-width="0.8"/>
<text x="652.5" y="337" font-size="7.5" fill="#5a5d61" text-anchor="middle" font-weight="bold">4</text>
<text x="665.4" y="333" font-size="5" fill="#1c3ee0" text-anchor="middle" font-weight="bold">1CT</text>
<path d="M661 336.5 h8" stroke="#1c3ee0" stroke-width="1.1"/><path d="M668 334.8 l2.5 1.7 l-2.5 1.7 Z" fill="#1c3ee0"/>
<text x="684" y="338" font-size="10.5" fill="#d6c400" text-anchor="middle" font-weight="bold" stroke="#6a5e00" stroke-width="0.5">P</text>
<rect x="405.5" y="340.8" width="294.5" height="156.5" fill="#ffffff"/>
<rect x="405.5" y="340.8" width="0.7" height="156.5" fill="#8a96a6"/>
<rect x="688.5" y="340.8" width="11.5" height="146.5" fill="#f0f0f0"/>
<rect x="689.3" y="352" width="9" height="58.5" fill="#cdcdcd"/>
<path d="M690.8 348.5 L693.2 346.1 L695.6 348.5" fill="none" stroke="#606060" stroke-width="1.1"/>
<path d="M690.8 480 L693.2 482.4 L695.6 480" fill="none" stroke="#606060" stroke-width="1.1"/>
<rect x="405.5" y="487" width="294.5" height="10" fill="#f0f0f0"/>
<rect x="415.7" y="488" width="47.2" height="8.3" fill="#cdcdcd"/>
<path d="M411.6 489.6 L409.3 492 L411.6 494.4" fill="none" stroke="#606060" stroke-width="1.1"/>
<path d="M681.5 489.6 L683.8 492 L681.5 494.4" fill="none" stroke="#606060" stroke-width="1.1"/>
<rect x="404" y="497.3" width="296" height="12.7" fill="url(#status)"/>
<rect x="404" y="497" width="296" height="0.9" fill="#4a82c8"/>
<text x="407" y="507.5" font-size="6.6" fill="#3a5590" text-anchor="start" stroke="#3a5590" stroke-width="0.2">Připraven</text>
<line x1="415.2" y1="466.1" x2="682.9" y2="466.1" stroke="#3a3a3a" stroke-width="0.75"/>
<line x1="549.1" y1="427.7" x2="682.9" y2="427.7" stroke="#3a3a3a" stroke-width="0.75"/>
<line x1="415.2" y1="466.1" x2="434.1" y2="427.9" stroke="#3a3a3a" stroke-width="0.75"/>
<line x1="415.2" y1="466.1" x2="434.1" y2="447.2" stroke="#3a3a3a" stroke-width="0.75"/>
<line x1="529.9" y1="466.1" x2="549.1" y2="408.3" stroke="#3a3a3a" stroke-width="0.75"/>
<line x1="529.9" y1="466.1" x2="549.1" y2="427.7" stroke="#3a3a3a" stroke-width="0.75"/>
<circle cx="415.2" cy="466.1" r="4.7" fill="none" stroke="#3a3a3a" stroke-width="0.8"/>
<circle cx="434.1" cy="466.1" r="4.7" fill="none" stroke="#3a3a3a" stroke-width="0.8"/>
<circle cx="453.4" cy="466.1" r="4.7" fill="none" stroke="#3a3a3a" stroke-width="0.8"/>
<circle cx="472.6" cy="466.1" r="4.7" fill="none" stroke="#3a3a3a" stroke-width="0.8"/>
<circle cx="491.5" cy="466.1" r="4.7" fill="none" stroke="#3a3a3a" stroke-width="0.8"/>
<circle cx="510.8" cy="466.1" r="4.7" fill="none" stroke="#3a3a3a" stroke-width="0.8"/>
<circle cx="529.9" cy="466.1" r="4.7" fill="none" stroke="#3a3a3a" stroke-width="0.8"/>
<circle cx="549.1" cy="466.1" r="4.7" fill="none" stroke="#3a3a3a" stroke-width="0.8"/>
<rect x="563.6" y="461.6" width="9.6" height="9" fill="#fff" stroke="#3a3a3a" stroke-width="0.8"/>
<rect x="582.5" y="461.6" width="9.6" height="9" fill="#fff" stroke="#3a3a3a" stroke-width="0.8"/>
<circle cx="606.7" cy="466.1" r="4.7" fill="none" stroke="#3a3a3a" stroke-width="0.8"/>
<circle cx="625.7" cy="466.1" r="4.7" fill="none" stroke="#3a3a3a" stroke-width="0.8"/>
<circle cx="644.7" cy="466.1" r="4.7" fill="none" stroke="#3a3a3a" stroke-width="0.8"/>
<rect x="659.1" y="461.6" width="9.6" height="9" fill="#fff" stroke="#3a3a3a" stroke-width="0.8"/>
<rect x="678.1" y="461.6" width="9.6" height="9" fill="#fff" stroke="#3a3a3a" stroke-width="0.8"/>
<circle cx="549.1" cy="427.7" r="4.7" fill="none" stroke="#3a3a3a" stroke-width="0.8"/>
<circle cx="568.6" cy="427.7" r="4.7" fill="none" stroke="#3a3a3a" stroke-width="0.8"/>
<circle cx="587.3" cy="427.7" r="4.7" fill="none" stroke="#3a3a3a" stroke-width="0.8"/>
<circle cx="606.7" cy="427.7" r="4.7" fill="none" stroke="#3a3a3a" stroke-width="0.8"/>
<rect x="620.9000000000001" y="423.2" width="9.6" height="9" fill="#fff" stroke="#3a3a3a" stroke-width="0.8"/>
<rect x="639.9000000000001" y="423.2" width="9.6" height="9" fill="#fff" stroke="#3a3a3a" stroke-width="0.8"/>
<circle cx="663.9" cy="427.7" r="4.7" fill="none" stroke="#3a3a3a" stroke-width="0.8"/>
<circle cx="682.9" cy="427.7" r="4.7" fill="none" stroke="#3a3a3a" stroke-width="0.8"/>
<circle cx="434.1" cy="427.9" r="4.7" fill="none" stroke="#3a3a3a" stroke-width="0.8"/>
<circle cx="434.1" cy="447.2" r="4.7" fill="none" stroke="#3a3a3a" stroke-width="0.8"/>
<circle cx="549.1" cy="408.3" r="4.7" fill="none" stroke="#3a3a3a" stroke-width="0.8"/>
<circle cx="625.7" cy="408.3" r="4.7" fill="none" stroke="#3a3a3a" stroke-width="0.8"/>
<circle cx="644.7" cy="408.3" r="4.7" fill="none" stroke="#3a3a3a" stroke-width="0.8"/>
<circle cx="568.4" cy="446.9" r="4.7" fill="none" stroke="#3a3a3a" stroke-width="0.8"/>
<circle cx="587.3" cy="446.9" r="4.7" fill="none" stroke="#3a3a3a" stroke-width="0.8"/>
<circle cx="625.7" cy="446.9" r="4.7" fill="none" stroke="#3a3a3a" stroke-width="0.8"/>
<circle cx="663.9" cy="446.9" r="4.7" fill="none" stroke="#3a3a3a" stroke-width="0.8"/>
<circle cx="682.9" cy="446.9" r="4.7" fill="none" stroke="#3a3a3a" stroke-width="0.8"/>
<line x1="625.7" y1="427.7" x2="625.7" y2="408.3" stroke="#3a3a3a" stroke-width="0.75"/>
<line x1="644.7" y1="427.7" x2="644.7" y2="408.3" stroke="#3a3a3a" stroke-width="0.75"/>
<line x1="568.4" y1="466.1" x2="568.4" y2="446.9" stroke="#3a3a3a" stroke-width="0.75"/>
<line x1="587.3" y1="466.1" x2="587.3" y2="446.9" stroke="#3a3a3a" stroke-width="0.75"/>
<line x1="625.7" y1="466.1" x2="625.7" y2="446.9" stroke="#3a3a3a" stroke-width="0.75"/>
<line x1="663.9" y1="466.1" x2="663.9" y2="446.9" stroke="#3a3a3a" stroke-width="0.75"/>
<line x1="682.9" y1="466.1" x2="682.9" y2="446.9" stroke="#3a3a3a" stroke-width="0.75"/>
<rect x="697" y="507.5" width="1.2" height="1.2" fill="#8aa0c0"/>
<rect x="697" y="505" width="1.2" height="1.2" fill="#8aa0c0"/>
<rect x="694.5" y="507.5" width="1.2" height="1.2" fill="#8aa0c0"/>
<rect x="697" y="502.5" width="1.2" height="1.2" fill="#8aa0c0"/>
<rect x="694.5" y="505" width="1.2" height="1.2" fill="#8aa0c0"/>
<rect x="692" y="507.5" width="1.2" height="1.2" fill="#8aa0c0"/>
<rect x="689" y="498.5" width="0.6" height="11" fill="#a8bedc"/>
<rect x="447" y="419.4" width="33" height="29.5" rx="3.5" fill="#fff" stroke="#333" stroke-width="0.75"/>
<text x="451" y="431" font-size="8" fill="#2a2a2a" text-anchor="start" >přepad</text>
<text x="451.5" y="441.8" font-size="8" fill="#2a2a2a" text-anchor="start" >?</text>
<circle cx="417.6" cy="309.5" r="10.5" fill="url(#orb)" stroke="#9aa3b0" stroke-width="0.87"/><circle cx="417.6" cy="309.5" r="9.25" fill="none" stroke="#ffffff" stroke-width="0.77" opacity="0.8"/><rect x="410.66" y="309.69" width="6.55" height="6.17" rx="1.35" fill="#2f9a30"/><rect x="411.63" y="310.46" width="2.41" height="2.41" fill="#c8d860" opacity="0.8"/><rect x="417.60" y="310.08" width="6.55" height="6.36" rx="1.35" fill="#2c6cc0"/><circle cx="420.88" cy="313.26" r="1.73" fill="none" stroke="#a8d0f0" stroke-width="0.67"/><rect x="414.32" y="302.56" width="7.13" height="7.13" rx="1.54" fill="#dc2a24"/><circle cx="417.02" cy="305.84" r="1.64" fill="none" stroke="#ffd8b0" stroke-width="0.67"/>
</svg></body></html>
